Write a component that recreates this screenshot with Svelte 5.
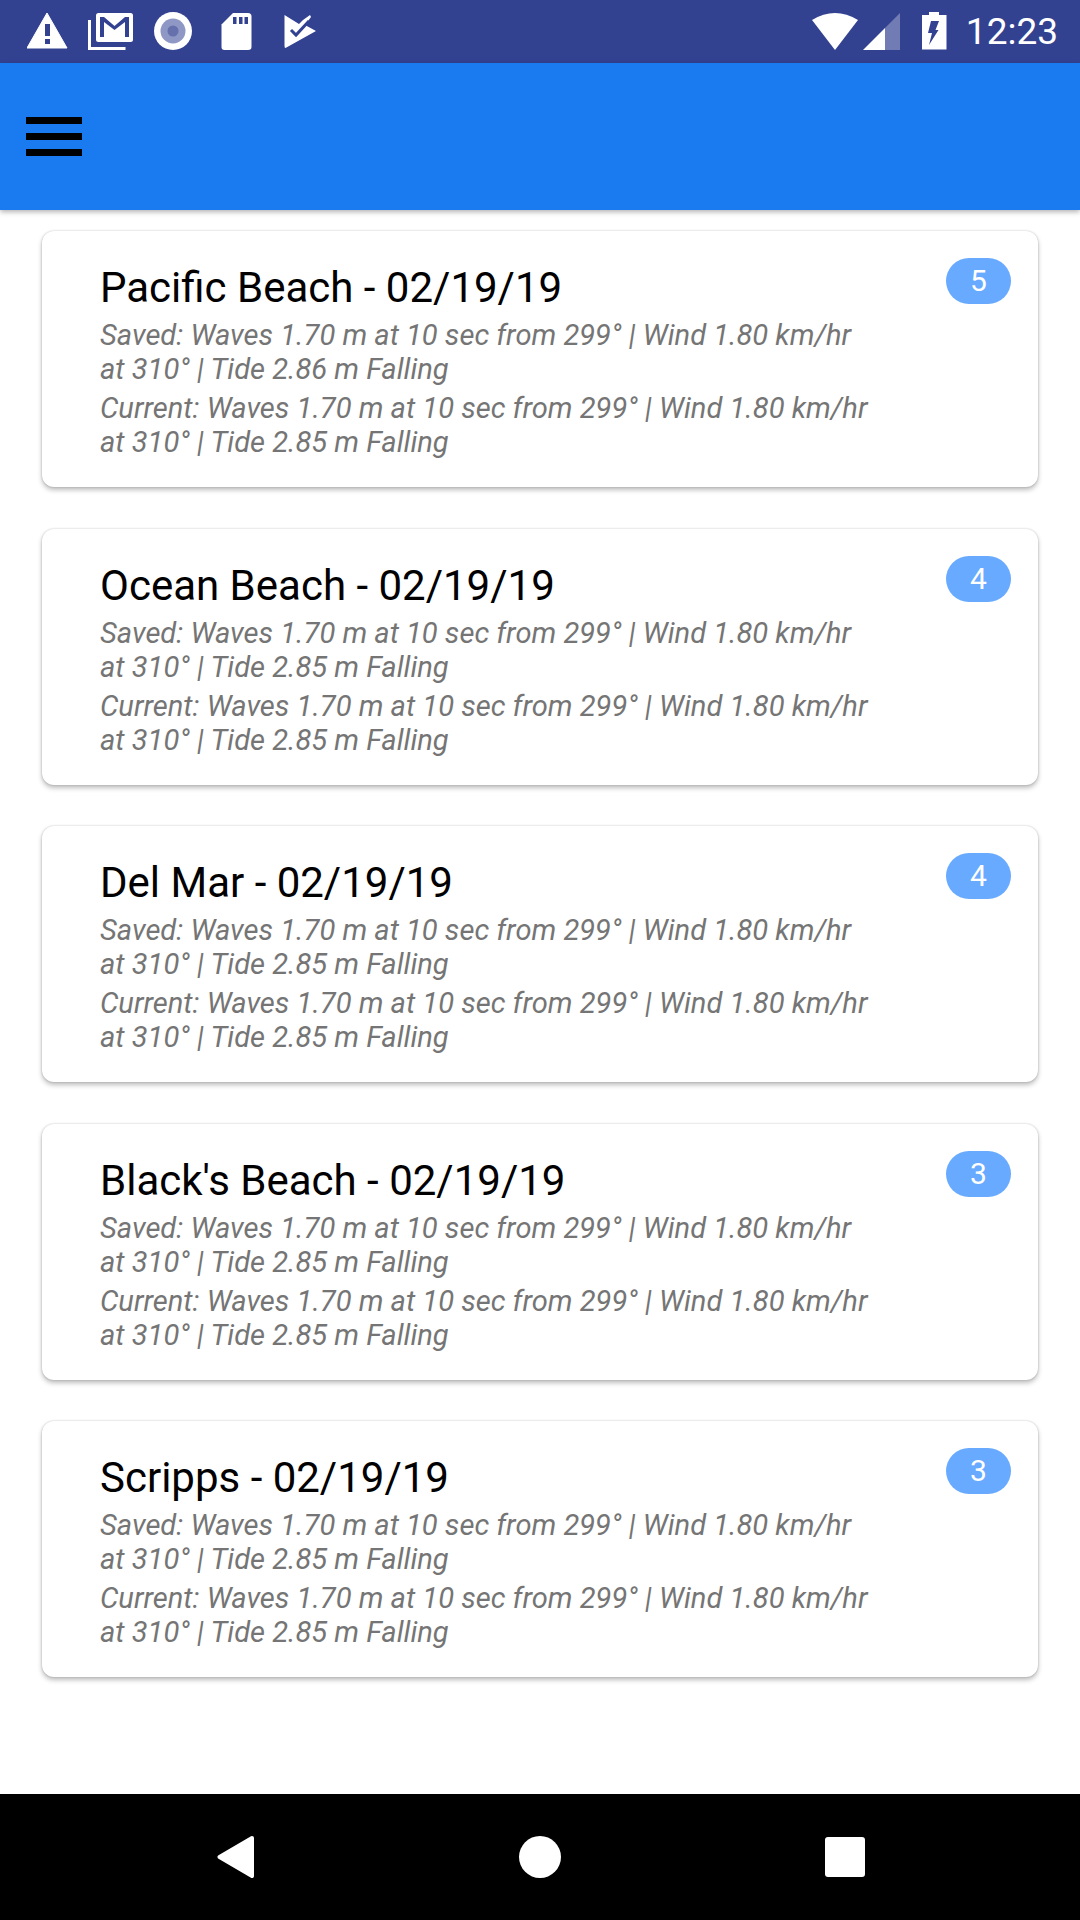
<script>
  const beaches = [
    { name: "Pacific Beach", count: 5, savedTide: "2.86" },
    { name: "Ocean Beach", count: 4, savedTide: "2.85" },
    { name: "Del Mar", count: 4, savedTide: "2.85" },
    { name: "Black's Beach", count: 3, savedTide: "2.85" },
    { name: "Scripps", count: 3, savedTide: "2.85" }
  ];

  const conditions = (tide) =>
    `Waves 1.70 m at 10 sec from 299° | Wind 1.80 km/hr at 310° | Tide ${tide} m Falling`;
</script>

<div class="screen">
  <div class="status-bar">
    <svg class="status-left" width="290" height="63" viewBox="27 0 290 63" aria-hidden="true">
      <!-- warning -->
      <path d="M47 13 L67 48 H27 Z" fill="#fff" stroke="#fff" stroke-width="1" stroke-linejoin="round" />
      <rect x="45" y="24" width="5" height="12" fill="#334191" />
      <rect x="45" y="39" width="5" height="5" fill="#334191" />
      <!-- gmail stack -->
      <path d="M89.5 20 V48.5 H125.5" fill="none" stroke="#fff" stroke-width="3" />
      <rect x="96" y="13" width="37" height="29" rx="2.5" fill="#fff" />
      <path d="M100 37 V17 H104 L114.500 26 L125 17 H129 V37 H125 V22 L114.500 30 L104 22 V37 Z" fill="#334191" />
      <!-- record -->
      <circle cx="173" cy="31" r="19" fill="#fff" />
      <circle cx="173" cy="31" r="12.5" fill="#8f97c5" />
      <circle cx="173" cy="31" r="5.5" fill="#6570ad" />
      <!-- sd card -->
      <path d="M233 13 H248 Q251.500 13 251.500 16.500 V47 Q251.500 50 248 50 H224.500 Q221.500 50 221.500 47 V24.500 Z" fill="#fff" />
      <rect x="233" y="17" width="3.500" height="7" fill="#334191" />
      <rect x="239" y="17" width="3.500" height="7" fill="#334191" />
      <rect x="244.500" y="17" width="3.500" height="7" fill="#334191" />
      <!-- inbox check -->
      <path d="M284.500 15 L299 24 L303 20 L310 15 L311 17 L305 25 L316 31 L285.500 48 Q284.500 48 284.500 46 Z" fill="#fff" />
      <path d="M291 30 L296 35 L309 21" fill="none" stroke="#334191" stroke-width="3" />
    </svg>

    <svg class="status-right" width="135" height="63" viewBox="812 0 135 63" aria-hidden="true">
      <!-- wifi -->
      <path d="M812 20 Q835 6 858 20 L835 50 Z" fill="#fff" />
      <!-- signal -->
      <path d="M900 13 V50 H885 V28 Z" fill="#707cb3" />
      <path d="M885 28 V50 H863 Z" fill="#fff" />
      <!-- battery -->
      <path d="M929 15 V12 H939 V15 H946.500 V49.500 H922 V15 Z" fill="#fff" />
      <path d="M931 21 H939 L935.500 30 H938.500 L929 45 L932 33 H928 Z" fill="#334191" />
    </svg>

    <span class="clock">12:23</span>
  </div>

  <header class="toolbar">
    <button class="menu-button" aria-label="Menu">
      <span></span>
      <span></span>
      <span></span>
    </button>
  </header>

  <main class="content">
    {#each beaches as beach}
      <article class="card">
        <div class="card-body">
          <h2>{beach.name} - 02/19/19</h2>
          <p>Saved: {conditions(beach.savedTide)}</p>
          <p>Current: {conditions("2.85")}</p>
        </div>
        <span class="badge">{beach.count}</span>
      </article>
    {/each}
  </main>

  <nav class="nav-bar">
    <svg class="nav-back" width="37" height="42" viewBox="0 0 37 42" aria-hidden="true">
      <path d="M35 2 L2.500 21 L35 40 Z" fill="#fff" stroke="#fff" stroke-width="4" stroke-linejoin="round" />
    </svg>
    <span class="nav-home"></span>
    <span class="nav-recent"></span>
  </nav>
</div>

<style>
  :global(body) {
    background: #fff;
  }

  .screen {
    display: flex;
    flex-direction: column;
    width: 1080px;
    height: 1920px;
    overflow: hidden;
    font-family: Roboto, "Liberation Sans", sans-serif;
    background: #fff;
  }

  .status-bar {
    display: flex;
    align-items: center;
    flex: none;
    height: 63px;
    padding: 0 22px 0 27px;
    box-sizing: border-box;
    background: #334191;
  }

  .status-left {
    display: block;
  }

  .status-right {
    display: block;
    margin-left: auto;
  }

  .clock {
    margin-left: 19px;
    font-size: 37px;
    line-height: 63px;
    color: #fff;
  }

  .toolbar {
    position: relative;
    display: flex;
    align-items: center;
    flex: none;
    height: 147px;
    padding-left: 26px;
    box-sizing: border-box;
    background: #1a7aef;
    box-shadow: 0 2px 5px rgba(0, 0, 0, 0.3);
  }

  .menu-button {
    display: flex;
    flex-direction: column;
    gap: 9.500px;
    width: 56px;
    padding: 0;
    border: 0;
    background: none;
  }

  .menu-button span {
    display: block;
    height: 6.500px;
    background: #000;
  }

  .content {
    flex: auto;
    padding: 21px 42px 0;
    box-sizing: border-box;
  }

  .card {
    display: flex;
    align-items: flex-start;
    height: 256px;
    margin-bottom: 41.500px;
    padding: 27px 27px 0 58px;
    box-sizing: border-box;
    background: #fff;
    border-radius: 12px;
    box-shadow: 0 0 2px rgba(0, 0, 0, 0.22), 0 3px 5px rgba(0, 0, 0, 0.26);
  }

  .card-body {
    flex: 1;
    min-width: 0;
    padding-right: 71px;
  }

  h2 {
    margin: 6px 0 6px;
    font-size: 42px;
    font-weight: 400;
    line-height: 48px;
    color: #000;
  }

  p {
    margin: 0 0 5px;
    font-size: 29.100px;
    font-style: italic;
    line-height: 34px;
    color: #757575;
  }

  .badge {
    flex: none;
    width: 65px;
    height: 46px;
    border-radius: 23px;
    font-size: 30px;
    line-height: 46px;
    text-align: center;
    color: #fff;
    background: #68aaff;
  }

  .nav-bar {
    flex: none;
    display: grid;
    grid-template-columns: 1fr 1fr 1fr;
    align-items: center;
    justify-items: center;
    height: 126px;
    padding: 0 83px;
    box-sizing: border-box;
    background: #000;
  }

  .nav-home {
    width: 42px;
    height: 42px;
    border-radius: 50%;
    background: #fff;
  }

  .nav-recent {
    width: 40px;
    height: 40px;
    border-radius: 3px;
    background: #fff;
  }
</style>
